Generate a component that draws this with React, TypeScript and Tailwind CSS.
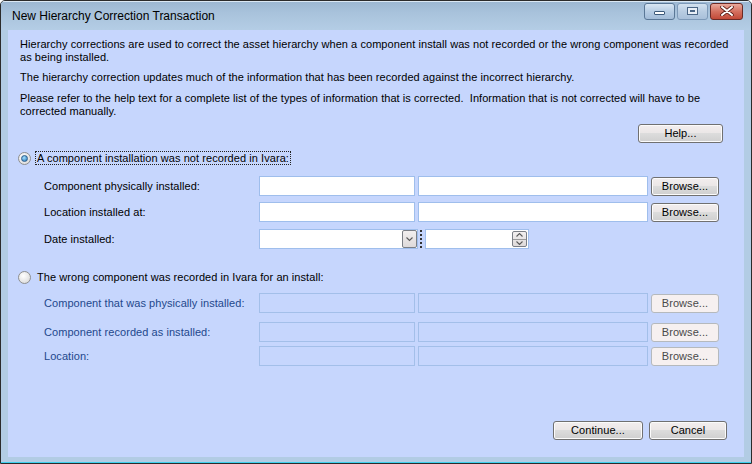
import React from "react";

const font = { fontFamily: '"Liberation Sans", Arial, sans-serif' };

function Btn({ label, w, disabled }: { label: string; w: string; disabled?: boolean }) {
  if (disabled) {
    return (
      <div
        className={`${w} h-[19px] shrink-0 flex items-center justify-center rounded-[3px] border border-[#b5b9bd] bg-[#f6f0f0] text-[#4a4a4a] text-[11px]`}
      >
        {label}
      </div>
    );
  }
  return (
    <div
      className={`${w} h-[19px] shrink-0 flex items-center justify-center rounded-[3px] border border-[#707070] text-[11px] text-black bg-[linear-gradient(#f3eeee_0%,#ebe7e7_45%,#dcdcdc_50%,#cfcfcf_100%)] shadow-[inset_0_0_0_1px_#fbfbfb]`}
    >
      {label}
    </div>
  );
}

function Radio({ checked }: { checked?: boolean }) {
  return (
    <div className="w-[13px] h-[13px] shrink-0 rounded-full border border-[#8e8f8f] bg-[radial-gradient(circle_at_40%_35%,#ffffff,#d4d4d4)] flex items-center justify-center">
      {checked && (
        <div className="w-[7px] h-[7px] rounded-full bg-[radial-gradient(circle_at_40%_35%,#a6e1ff,#1b6fb3)] border border-[#2d5e8c]" />
      )}
    </div>
  );
}

function Row({
  label,
  disabled,
  className,
}: {
  label: string;
  disabled?: boolean;
  className: string;
}) {
  const box = disabled
    ? "border-[#a3bfe9] bg-transparent"
    : "border-[#9fbeec] bg-white";
  return (
    <div className={`flex items-center ${className}`}>
      <div className={`w-[251px] shrink-0 pl-[36px] text-[11px] whitespace-nowrap ${disabled ? "text-[#23488c]" : "text-black"}`}>
        {label}
      </div>
      <div className={`w-[156px] h-[20px] shrink-0 border ${box}`} />
      <div className={`ml-[3px] w-[230px] h-[20px] shrink-0 border ${box}`} />
      <div className="ml-[3px]">
        <Btn label="Browse..." w="w-[68px]" disabled={disabled} />
      </div>
    </div>
  );
}

export default function App() {
  return (
    <div
      style={font}
      className="w-[752px] h-[464px] border border-[#2b2b2b] bg-[#b2cce4] flex flex-col overflow-hidden rounded-t-[5px]"
    >
      {/* title bar */}
      <div className="h-[29px] shrink-0 flex items-center pl-[11px] pr-[8px] bg-[linear-gradient(#9db8d3,#a9c3dc_40%,#b4cde5)] border-t border-t-[#dbe8f4]">
        <div className="text-[12px] text-black mt-[-1px]">New Hierarchy Correction Transaction</div>
        <div className="ml-auto flex items-center gap-[2px] mt-[-10px]">
          <div className="w-[31px] h-[17px] rounded-[3px] border border-[#5a7796] bg-[linear-gradient(#d9e6f3,#b7cde4_50%,#a3bcd8)] flex items-center justify-center">
            <div className="w-[11px] h-[4px] bg-white border border-[#3d5a7a] rounded-[1px] mt-[3px]" />
          </div>
          <div className="w-[31px] h-[17px] rounded-[3px] border border-[#7d99b8] bg-[linear-gradient(#d3e1ef,#b8cce2_50%,#a9c0da)] flex items-center justify-center">
            <div className="w-[11px] h-[8px] border border-[#4b6686] bg-[#e8eef6] flex items-center justify-center">
              <div className="w-[5px] h-[2px] border border-[#4b6686]" />
            </div>
          </div>
          <div className="w-[33px] h-[17px] rounded-[3px] border border-[#6b2a25] bg-[linear-gradient(#e9a99c,#d4705f_50%,#c24a38)] flex items-center justify-center">
            <svg width="14" height="10" viewBox="0 0 14 10">
              <path d="M2 1 L12 9 M12 1 L2 9" stroke="#5a1e16" strokeWidth="3.6" strokeLinecap="round" />
              <path d="M2 1 L12 9 M12 1 L2 9" stroke="#ffffff" strokeWidth="2" strokeLinecap="round" />
            </svg>
          </div>
        </div>
      </div>

      {/* client */}
      <div className="mx-[7px] h-[427px] shrink-0 bg-[#c6d6fd] flex flex-col text-[11px] leading-[13px] tracking-[0.06px] text-black">
        <div className="pl-[12px] pr-[14px] pt-[8px]">
          <p>
            Hierarchy corrections are used to correct the asset hierarchy when a component install was not recorded or the wrong component was recorded as being installed.
          </p>
          <p className="mt-[7px]">
            The hierarchy correction updates much of the information that has been recorded against the incorrect hierarchy.
          </p>
          <p className="mt-[8px]">
            Please refer to the help text for a complete list of the types of information that is corrected.&nbsp; Information that is not corrected will have to be corrected manually.
          </p>
        </div>

        <div className="flex justify-end pr-[21px] mt-[6px]">
          <Btn label="Help..." w="w-[85px]" />
        </div>

        <div className="flex items-center mt-[8px] pl-[10px] h-[14px]">
          <Radio checked />
          <div className="ml-[4px] px-[1px] border border-dotted border-[#222] leading-[12px]">
            A component installation was not recorded in Ivara:
          </div>
        </div>

        <Row label="Component physically installed:" className="mt-[11px]" />
        <Row label="Location installed at:" className="mt-[6px]" />

        <div className="flex items-center mt-[7px]">
          <div className="w-[251px] shrink-0 pl-[36px]">Date installed:</div>
          <div className="w-[159px] h-[20px] shrink-0 border border-[#9fbeec] bg-white flex justify-end">
            <div className="w-[15px] h-[18px] rounded-[2px] border border-[#7b7f86] bg-[linear-gradient(#f2efef,#dedada)] flex items-center justify-center">
              <svg width="7" height="5" viewBox="0 0 7 5">
                <path d="M0.5 0.5 L3.5 3.5 L6.5 0.5" stroke="#5a5a5a" strokeWidth="1.1" fill="none" />
              </svg>
            </div>
          </div>
          <div className="ml-[2px] h-[18px] border-l-2 border-dotted border-[#333]" />
          <div className="ml-[3px] w-[104px] h-[20px] shrink-0 border border-[#9fbeec] bg-white flex items-center justify-end pr-[1px]">
            <div className="w-[15px] h-[16px] rounded-[2px] border border-[#7b7f86] bg-[linear-gradient(#f2efef,#dedada)] flex flex-col">
              <div className="flex-1 flex items-center justify-center border-b border-[#9a9a9a]">
                <svg width="7" height="4" viewBox="0 0 7 4">
                  <path d="M0.5 3.5 L3.5 0.5 L6.5 3.5" stroke="#5a5a5a" strokeWidth="1.1" fill="none" />
                </svg>
              </div>
              <div className="flex-1 flex items-center justify-center">
                <svg width="7" height="4" viewBox="0 0 7 4">
                  <path d="M0.5 0.5 L3.5 3.5 L6.5 0.5" stroke="#5a5a5a" strokeWidth="1.1" fill="none" />
                </svg>
              </div>
            </div>
          </div>
        </div>

        <div className="flex items-center mt-[21px] pl-[10px] h-[14px]">
          <Radio />
          <div className="ml-[5px] px-[1px]">The wrong component was recorded in Ivara for an install:</div>
        </div>

        <Row label="Component that was physically installed:" disabled className="mt-[9px]" />
        <Row label="Component recorded as installed:" disabled className="mt-[9px]" />
        <Row label="Location:" disabled className="mt-[4px]" />

        <div className="mt-auto mb-[17px] flex justify-end pr-[17px] gap-[6px]">
          <Btn label="Continue..." w="w-[90px]" />
          <Btn label="Cancel" w="w-[78px]" />
        </div>
      </div>

      <div className="flex-1" />
      <div className="h-[1px] bg-[#3fd0ee]" />
    </div>
  );
}
